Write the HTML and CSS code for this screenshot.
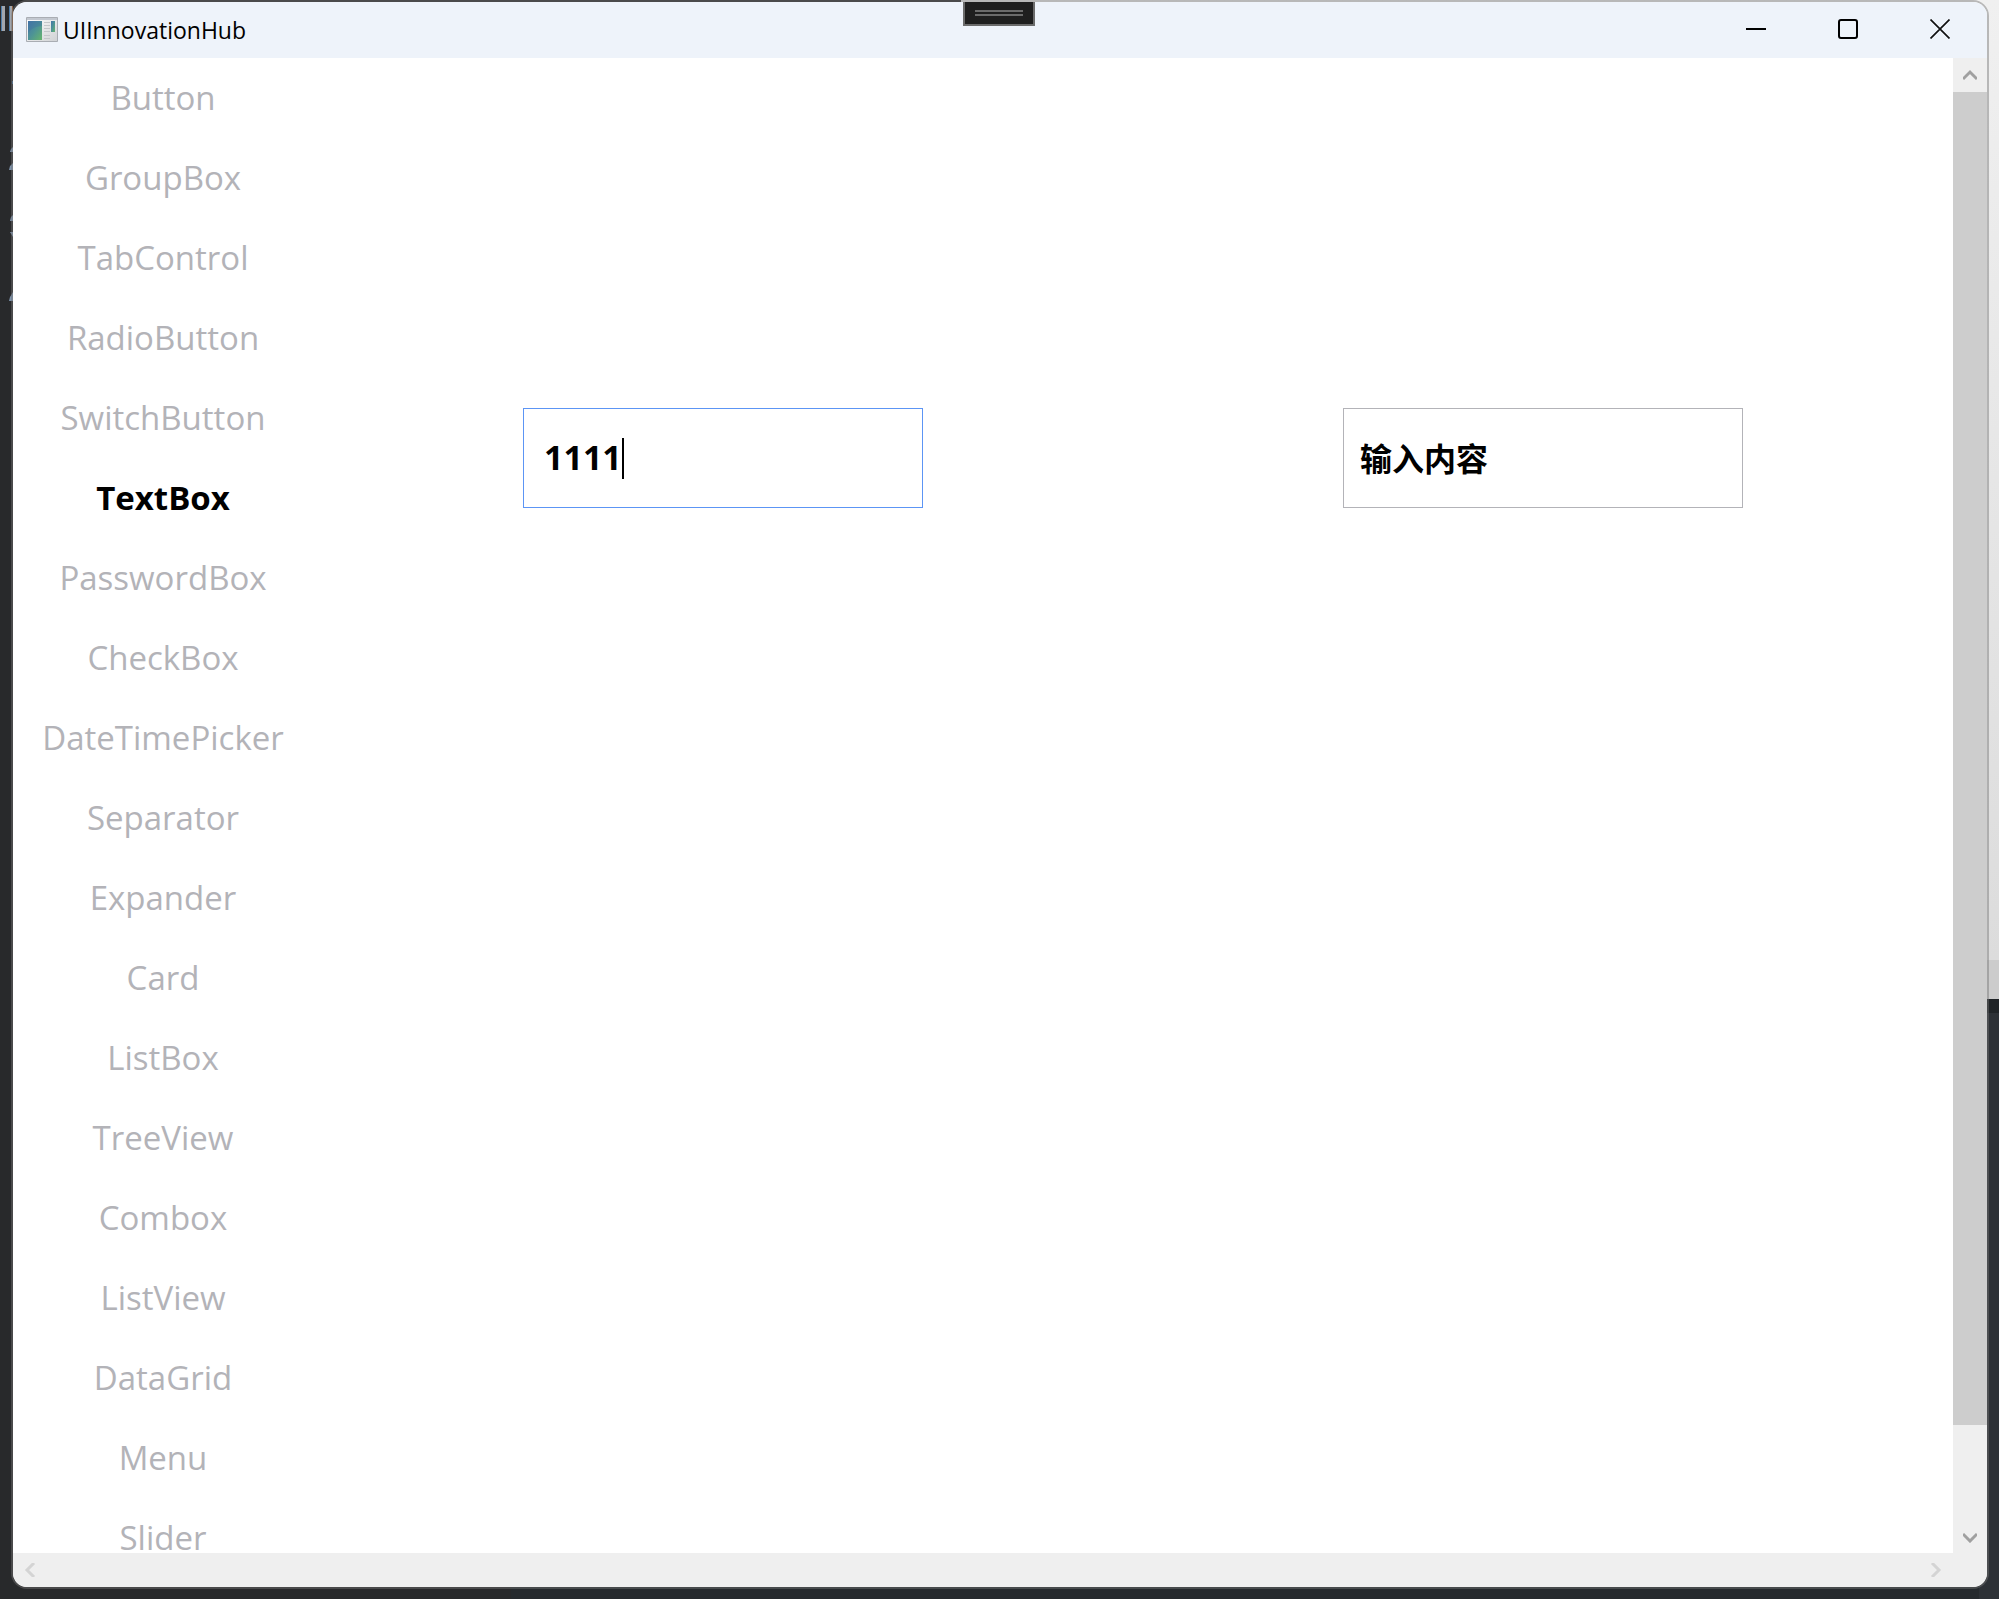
FILE: index.html
```html
<!DOCTYPE html>
<html lang="en">
<head>
<meta charset="utf-8">
<title>UIInnovationHub</title>
<link rel="stylesheet" href="styles.css">
</head>
<body>
<div class="desktop">
  <svg class="backdrop-left" width="14" height="320" viewBox="0 0 14 320" aria-hidden="true">
    <path d="M1 6h4v25h-4zM9 6h4v25h-4z" fill="#a2a6ac"/>
    <path d="M1 6h1v25h-1zM9 6h1v25h-1z" fill="#4c7dab"/>
    <path d="M12 6h1v25h-1z" fill="#8a6040"/>
    <path d="M12 81h1v3h-1z" fill="#3e6c96"/>
    <path d="M10 152l1-3 2-2v5zM9 170l1-4 3-3v7zM10 221l1-4 2-2v6zM10 232h3v5zM9 301l1-4 3-5v9z" fill="#7d93ac"/>
  </svg>
  <div class="window">
    <header class="titlebar">
      <svg class="app-icon" width="32" height="26" viewBox="0 0 32 26" aria-hidden="true">
        <defs>
          <linearGradient id="frame" x1="0" y1="0" x2="1" y2="1"><stop offset="0" stop-color="#ffffff"/><stop offset="1" stop-color="#d0d2d4"/></linearGradient>
          <linearGradient id="view" x1="0" y1="0" x2="1" y2="1"><stop offset="0" stop-color="#4474a8"/><stop offset=".5" stop-color="#4d9396"/><stop offset="1" stop-color="#67b56c"/></linearGradient>
        </defs>
        <path d="M.5 .5h31v24h-31z" fill="url(#frame)" stroke="#a9adb3"/>
        <path d="M1 1h30v2h-30z" fill="#c3c8d0"/>
        <path d="M2 4h14v19h-14z" fill="url(#view)"/>
        <path d="M2 16q5-7 14-7V4H2z" fill="#3f70a4" opacity=".35"/>
        <path d="M18 5.500h6M18 8.500h6M18 11.500h6M18 14.500h6M18 18.500h6M18 21.500h6" stroke="#c4c7ca"/>
        <path d="M25 4h4v11h-4z" fill="url(#view)"/>
      </svg>
      <h1 class="title">UIInnovationHub</h1>
      <div class="caption-buttons">
        <button class="caption-button" type="button" aria-label="Minimize"><svg width="20" height="20" viewBox="0 0 20 20"><path d="M0 10h20" stroke="#000" stroke-width="2"/></svg></button>
        <button class="caption-button" type="button" aria-label="Maximize"><svg width="20" height="20" viewBox="0 0 20 20"><rect x="1" y="1" width="18" height="18" rx="2" fill="none" stroke="#000" stroke-width="2"/></svg></button>
        <button class="caption-button" type="button" aria-label="Close"><svg width="20" height="20" viewBox="0 0 20 20"><path d="M.5 .5l19 19M19.5 .5l-19 19" stroke="#111" stroke-width="1.7"/></svg></button>
      </div>
    </header>
    <button class="debug-handle" type="button" aria-label="Debug toolbar"><svg width="48" height="6" viewBox="0 0 48 6"><path d="M0 1h48M0 5h48" stroke="#6b6b6b" stroke-width="2"/></svg></button>
    <div class="client">
      <div class="viewport">
        <nav class="sidebar">
          <a class="item" href="#button">Button</a>
          <a class="item" href="#groupbox">GroupBox</a>
          <a class="item" href="#tabcontrol">TabControl</a>
          <a class="item" href="#radiobutton">RadioButton</a>
          <a class="item" href="#switchbutton">SwitchButton</a>
          <a class="item selected" href="#textbox" aria-current="page">TextBox</a>
          <a class="item" href="#passwordbox">PasswordBox</a>
          <a class="item" href="#checkbox">CheckBox</a>
          <a class="item" href="#datetimepicker">DateTimePicker</a>
          <a class="item" href="#separator">Separator</a>
          <a class="item" href="#expander">Expander</a>
          <a class="item" href="#card">Card</a>
          <a class="item" href="#listbox">ListBox</a>
          <a class="item" href="#treeview">TreeView</a>
          <a class="item" href="#combox">Combox</a>
          <a class="item" href="#listview">ListView</a>
          <a class="item" href="#datagrid">DataGrid</a>
          <a class="item" href="#menu">Menu</a>
          <a class="item" href="#slider">Slider</a>
        </nav>
        <main class="samples">
          <div class="sample">
            <div class="field">
              <input class="textbox focused" type="text" value="1111" aria-label="Text">
              <span class="caret"></span>
            </div>
          </div>
          <div class="sample">
            <div class="field">
              <input class="textbox" type="text" placeholder="输入内容" aria-label="输入内容">
            </div>
          </div>
        </main>
      </div>
      <div class="scrollbar vertical">
        <button class="arrow" type="button" aria-label="Scroll up"><svg width="14" height="14" viewBox="0 0 14 14"><path d="M0 11l7-7 7 7" fill="none" stroke="#a0a0a0" stroke-width="3"/></svg></button>
        <div class="track"><div class="thumb"></div><div class="rest"></div></div>
        <button class="arrow" type="button" aria-label="Scroll down"><svg width="14" height="14" viewBox="0 0 14 14"><path d="M0 5l7 7 7-7" fill="none" stroke="#a0a0a0" stroke-width="3"/></svg></button>
      </div>
      <div class="scrollbar horizontal">
        <button class="arrow" type="button" aria-label="Scroll left"><svg width="12" height="14" viewBox="0 0 12 14"><path d="M10 0l-7 7 7 7" fill="none" stroke="#d4d4d4" stroke-width="3"/></svg></button>
        <button class="arrow" type="button" aria-label="Scroll right"><svg width="12" height="14" viewBox="0 0 12 14"><path d="M2 0l7 7-7 7" fill="none" stroke="#d4d4d4" stroke-width="3"/></svg></button>
      </div>
      <div class="corner"></div>
    </div>
  </div>
</div>
</body>
</html>
```
FILE: styles.css
```css
* {
  box-sizing: border-box;
}

body {
  margin: 0;
  font-family: "Open Sans", "Noto Sans CJK SC", sans-serif;
}

button {
  margin: 0;
  padding: 0;
  border: 0;
  background: none;
}

svg {
  display: block;
}

.desktop {
  position: relative;
  height: 100vh;
  padding: 0 10px 10px 11px;
  background:
    linear-gradient(#f0f0f0, #dcdcdc) right 0 top 0 / 1038px 960px no-repeat,
    linear-gradient(#cccccc, #cccccc) right 0 top 960px / 20px 39px no-repeat,
    linear-gradient(#202427, #202427) right 0 top 999px / 20px 14px no-repeat,
    linear-gradient(#2d3136, #2d3136) right 0 top 1013px / 20px 100% no-repeat,
    linear-gradient(#262a2e, #262a2e) 511px 100% / 100% 20px no-repeat,
    #28292b;
}

.backdrop-left {
  position: absolute;
  left: 0;
  top: 0;
}

.window {
  position: relative;
  display: flex;
  flex-direction: column;
  height: 100%;
  border: 2px solid rgba(115, 115, 115, 0.45);
  border-radius: 16px;
  background: #ffffff;
  background-clip: padding-box;
  overflow: hidden;
}

.titlebar {
  display: flex;
  align-items: center;
  height: 56px;
  flex: none;
  padding-left: 13px;
  background: #eef3fa;
}

.title {
  margin: 0 0 0 5px;
  flex: 1;
  font-size: 23px;
  font-weight: 400;
  line-height: 32px;
  color: #000000;
}

.caption-buttons {
  display: flex;
  align-self: flex-start;
  padding-right: 1px;
}

.caption-button {
  display: flex;
  align-items: center;
  justify-content: center;
  width: 92px;
  height: 54px;
}

.debug-handle {
  position: absolute;
  top: -2px;
  left: 50%;
  display: flex;
  align-items: center;
  justify-content: center;
  width: 72px;
  height: 26px;
  margin-left: -37px;
  border: 2px solid #6b6b6b;
  background: #1f1f1f;
}

.client {
  flex: 1;
  min-height: 0;
  display: grid;
  grid-template-columns: 1fr 34px;
  grid-template-rows: 1fr 34px;
}

.viewport {
  display: grid;
  grid-template-columns: 300px 1fr;
  grid-auto-rows: 1600px;
  min-height: 0;
  overflow: hidden;
}

.sidebar {
  display: flex;
  flex-direction: column;
}

.item {
  display: flex;
  align-items: center;
  justify-content: center;
  height: 80px;
  font-size: 33px;
  line-height: 30px;
  text-decoration: none;
  color: #b3b3b8;
}

.item.selected {
  font-weight: 700;
  color: #000000;
}

.samples {
  display: grid;
  grid-template-columns: 1fr 1fr;
  grid-template-rows: 1fr 1fr;
}

.sample {
  display: flex;
  align-items: center;
  justify-content: center;
}

.field {
  position: relative;
  width: 400px;
}

.textbox {
  display: block;
  width: 100%;
  height: 100px;
  padding: 0 16px;
  border: 1px solid #b3b3b8;
  border-radius: 0;
  outline: none;
  background: #ffffff;
  font-family: inherit;
  font-size: 32px;
  font-weight: 700;
  color: #000000;
}

.textbox::placeholder {
  color: #000000;
  opacity: 1;
}

.textbox.focused {
  padding: 0 20px 2px;
  border-color: #5c95f5;
  font-size: 34px;
}

.caret {
  position: absolute;
  left: 99px;
  top: 30px;
  width: 2px;
  height: 41px;
  background: #000000;
}

.scrollbar {
  display: flex;
  background: #efefef;
}

.vertical {
  flex-direction: column;
}

.horizontal {
  justify-content: space-between;
}

.arrow {
  display: flex;
  align-items: center;
  justify-content: center;
  width: 34px;
  height: 34px;
  flex: none;
}

.track {
  flex: 1;
  display: flex;
  flex-direction: column;
}

.thumb {
  flex: 1333;
  background: #cdcdcd;
}

.rest {
  flex: 94;
}

.corner {
  background: #efefef;
}
```
